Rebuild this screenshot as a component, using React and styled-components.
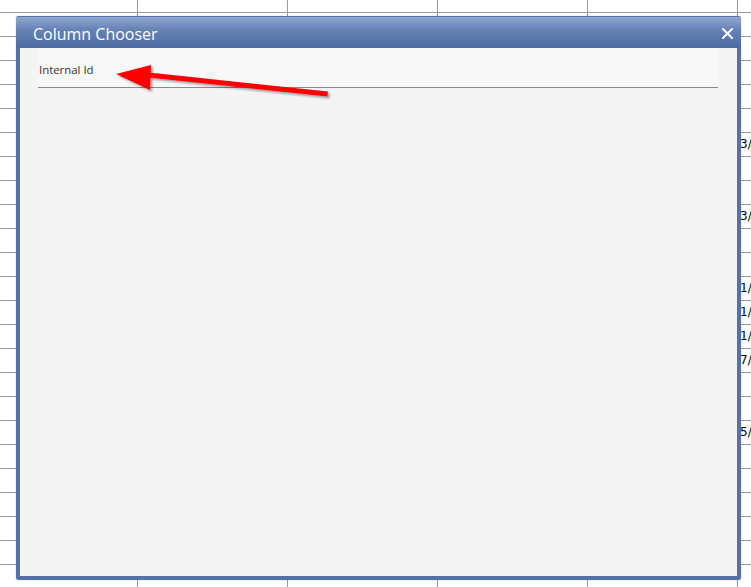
import React from 'react';
import styled, { createGlobalStyle } from 'styled-components';

const GlobalStyle = createGlobalStyle`
  html, body {
    margin:0;
    padding:0;
    background:#ffffff;
    overflow:hidden;
  }
  * { box-sizing:border-box; }
`

const Page = styled.div`
  position:relative;
  width:751px;
  height:587px;
  overflow:hidden;
  background:#ffffff;
`

const Sheet = styled.div`
  display:flex;
  flex-direction:column;
  width:751px;
`

const SheetRow = styled.div`
  display:grid;
  grid-template-columns:138px 150px 150px 150px 150px 1fr;
  height:${p => p.first ? '13px' : '24px'};
`

const Cell = styled.div`
  border-bottom:1px solid #9a9a9a;
  border-right:${p => p.last ? 'none' : '1px solid #9a9a9a'};
  font-family:"DejaVu Sans", "Liberation Sans", sans-serif;
  font-size:12px;
  color:#000;
  line-height:23px;
  padding-left:2px;
  white-space:nowrap;
  overflow:hidden;
`

const Dialog = styled.div`
  position:absolute;
  left:16px;
  top:16px;
  width:725px;
  height:564px;
  display:flex;
  flex-direction:column;
  border:4px solid #5572a8;
  border-top:1px solid #5572a8;
  border-radius:3px;
  background:#f4f4f4;
  box-shadow:0 0 1px rgba(0,0,0,0.5);
`

const TitleBar = styled.div`
  height:31px;
  margin:0 -4px;
  padding:0 8px 0 17px;
  display:flex;
  align-items:center;
  justify-content:space-between;
  background:linear-gradient(to bottom, #91a8cd 0%, #6683b6 40%, #4e6b9f 100%);
`

const Title = styled.div`
  font-family:"Open Sans", "Noto Sans", sans-serif;
  font-size:16px;
  color:#ffffff;
  padding-top:3px;
`

const Close = styled.div`
  width:11px;
  height:11px;
  margin-top:1px;
  display:flex;
`

const Content = styled.div`
  flex:1;
  position:relative;
  padding:0 19px 0 18px;
`

const Item = styled.div`
  height:40px;
  padding:4px 0 0 1px;
  display:flex;
  align-items:center;
  background:#f8f8f8;
  border-bottom:1px solid #8a8a8a;
  font-family:"Open Sans", "Noto Sans", sans-serif;
  font-size:11.4px;
  color:#333333;
`

const Arrow = styled.svg`
  position:absolute;
  left:76px;
  top:4px;
  overflow:visible;
`

const rowTexts = { 6: '3/', 9: '3/', 12: '1/', 13: '1/', 14: '1/', 15: '7/', 18: '5/' }

const App = () => {
  const rows = []
  for (let i = 0; i < 25; i++) {
    rows.push(
      <SheetRow key={i} first={i === 0}>
        <Cell />
        <Cell />
        <Cell />
        <Cell />
        <Cell />
        <Cell last>{rowTexts[i] || ''}</Cell>
      </SheetRow>
    )
  }

  return (
    <Page>
      <GlobalStyle />
      <Sheet>{rows}</Sheet>
      <Dialog>
        <TitleBar>
          <Title>Column Chooser</Title>
          <Close>
            <svg width="11" height="11" viewBox="0 0 11 11">
              <path d="M1 1 L10 10 M10 1 L1 10" stroke="#ffffff" strokeWidth="2" strokeLinecap="square" />
            </svg>
          </Close>
        </TitleBar>
        <Content>
          <Item>Internal Id</Item>
          <Arrow width="240" height="60" viewBox="0 0 240 60">
            <defs>
              <filter id="sh" x="-10%" y="-30%" width="130%" height="180%">
                <feDropShadow dx="2" dy="2" stdDeviation="1.2" floodColor="#000" floodOpacity="0.35" />
              </filter>
            </defs>
            <g filter="url(#sh)">
              <path d="M53 20.5 L232 39.5 L231.4 44.5 L52.4 25.5 Z" fill="#ff0000" />
              <path d="M20 22 L55 13 L54 38 Z" fill="#ff0000" />
            </g>
          </Arrow>
        </Content>
      </Dialog>
    </Page>
  )
}

export default App
